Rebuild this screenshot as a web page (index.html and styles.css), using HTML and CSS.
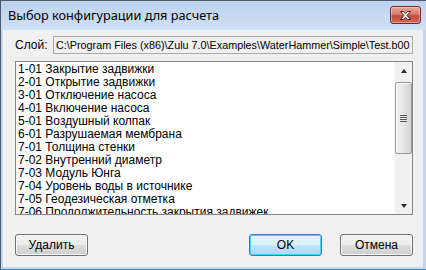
FILE: index.html
```html
<!DOCTYPE html>
<html lang="ru"><head>
    <meta charset="UTF-8">
    <title>Выбор конфигурации для расчета</title>
    <link rel="stylesheet" href="styles.css">
</head>
<body>

    <div class="window">
        <div class="titlebar">
            <span class="title">Выбор конфигурации для расчета</span>
            <button class="close-btn" title="Закрыть">
                <svg width="17" height="11" viewBox="0 0 17 11">
                    <path d="M3.5 1.5 L6.5 1.5 L8.5 3.8 L10.5 1.5 L13.5 1.5 L10 5.5 L13.5 9.5 L10.5 9.5 L8.5 7.2 L6.5 9.5 L3.5 9.5 L7 5.5 Z" fill="#ffffff" stroke="#5a2320" stroke-width="1" stroke-linejoin="round"/>
                </svg>
            </button>
        </div>

        <div class="client">
            <div class="layer-row">
                <span class="layer-label">Слой:</span>
                <div class="path-field">C:\Program Files (x86)\Zulu 7.0\Examples\WaterHammer\Simple\Test.b00</div>
            </div>

            <div class="listbox">
                <ul class="items">
                    <li>1-01 Закрытие задвижки</li>
                    <li>2-01 Открытие задвижки</li>
                    <li>3-01 Отключение насоса</li>
                    <li>4-01 Включение насоса</li>
                    <li>5-01 Воздушный колпак</li>
                    <li>6-01 Разрушаемая мембрана</li>
                    <li>7-01 Толщина стенки</li>
                    <li>7-02 Внутренний диаметр</li>
                    <li>7-03 Модуль Юнга</li>
                    <li>7-04 Уровень воды в источнике</li>
                    <li>7-05 Геодезическая отметка</li>
                    <li>7-06 Продолжительность закрытия задвижек</li>
                </ul>
                <div class="scrollbar">
                    <div class="arrow up"><span></span></div>
                    <div class="track">
                        <div class="thumb"><span class="grip"></span></div>
                    </div>
                    <div class="arrow down"><span></span></div>
                </div>
            </div>

            <div class="buttons">
                <button class="btn">Удалить</button>
                <span class="spacer"></span>
                <button class="btn default">OK</button>
                <button class="btn">Отмена</button>
            </div>
        </div>
    </div>

</body></html>
```

FILE: styles.css
```css
/* windows 7 basic dialog */
body {
    margin: 0;
    background-color: #ffffff;
    font-family: "Liberation Sans", Arial, sans-serif;
    font-size: 12px;
    color: #000000;
}

.window {
    width: 426px;
    height: 270px;
    box-sizing: border-box;
    display: flex;
    flex-direction: column;
    background-color: #c2d7ef;
    border-top: 1px solid #4e5a6a;
    border-left: 1px solid #4e5a6a;
    border-bottom: 1px solid #2e8fd6;
}

.titlebar {
    height: 29px;
    display: flex;
    justify-content: space-between;
    align-items: flex-start;
    padding: 0 5px 0 7px;
    background: linear-gradient(#bcd3ee, #cfe0f4);
}

.title {
    font-family: "Noto Sans", "Open Sans", sans-serif;
    font-size: 12.7px;
    line-height: 28px;
    color: #000000;
}

.close-btn {
    margin-top: 5px;
    width: 31px;
    height: 18px;
    padding: 0;
    display: flex;
    align-items: center;
    justify-content: center;
    border: 1px solid #6d2b29;
    border-radius: 3px;
    background: linear-gradient(#e8a597 0%, #d57e6e 45%, #c0493c 55%, #cf6b59 100%);
    box-shadow: inset 0 0 0 1px rgba(255, 255, 255, 0.35);
}

.client {
    flex: 1;
    margin: 0 3px 2px 2px;
    padding: 6px 10px 0 11px;
    background-color: #f0f0f0;
    border-left: 1px solid #ffffff;
    display: flex;
    flex-direction: column;
}

.layer-row {
    display: flex;
    align-items: center;
    height: 18px;
}

.layer-label {
    width: 38px;
}

.path-field {
    flex: 1;
    height: 18px;
    box-sizing: border-box;
    padding: 1px 2px;
    border: 1px solid #a9a9a9;
    background-color: #f0f0f0;
    white-space: nowrap;
    overflow: hidden;
    font-size: 10.8px;
    line-height: 14px;
}

.listbox {
    margin-top: 7px;
    height: 154px;
    box-sizing: border-box;
    border: 1px solid #828790;
    background-color: #ffffff;
    display: flex;
    overflow: hidden;
}

.items {
    flex: 1;
    margin: 0;
    padding: 1px 0 0 2px;
    list-style: none;
    overflow: hidden;
}

.items li {
    height: 13px;
    line-height: 13px;
    white-space: nowrap;
}

.scrollbar {
    width: 17px;
    display: flex;
    flex-direction: column;
    background-color: #f0f0f0;
    border-left: 1px solid #f8f8f8;
}

.arrow {
    height: 17px;
    display: flex;
    align-items: center;
    justify-content: center;
}

.arrow span {
    width: 0;
    height: 0;
    border-left: 3px solid transparent;
    border-right: 3px solid transparent;
}

.arrow.up span {
    border-bottom: 4px solid #2b2b2b;
}

.arrow.down span {
    border-top: 4px solid #2b2b2b;
}

.track {
    flex: 1;
    padding: 3px 0 0 0;
}

.thumb {
    height: 72px;
    box-sizing: border-box;
    border: 1px solid #979797;
    border-radius: 2px;
    background: linear-gradient(to right, #f3f3f3, #e4e4e4 50%, #d2d2d2);
    box-shadow: inset 1px 1px 0 #ffffff;
    display: flex;
    align-items: center;
    justify-content: center;
}

.grip {
    width: 7px;
    height: 7px;
    background: repeating-linear-gradient(#5a5a5a 0 1px, #e8e8e8 1px 2px);
}

.buttons {
    display: flex;
    margin-top: 19px;
}

.spacer {
    flex: 1;
}

.btn {
    width: 73px;
    height: 22px;
    margin-left: 18px;
    padding: 0;
    font-family: "Liberation Sans", Arial, sans-serif;
    font-size: 12px;
    color: #000000;
    border: 1px solid #707070;
    border-radius: 3px;
    background: linear-gradient(#f2f2f2 0%, #ebebeb 48%, #dddddd 52%, #cfcfcf 100%);
    box-shadow: inset 0 0 0 1px #fbfbfb;
}

.btn:first-child {
    margin-left: 0;
}

.btn.default {
    border-color: #3c7fb1;
    background: linear-gradient(#eaf6fd 0%, #d9f0fc 48%, #bee6fd 52%, #a7d9f5 100%);
    box-shadow: inset 0 0 0 1px #48d0f8;
}
```
